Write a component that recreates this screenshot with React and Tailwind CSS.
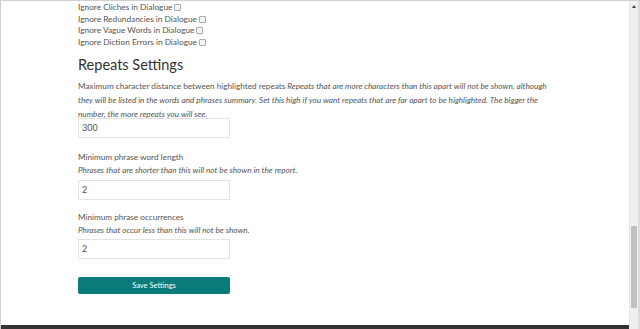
export default function App() {
  const checks = [
    "Ignore Cliches in Dialogue",
    "Ignore Redundancies in Dialogue",
    "Ignore Vague Words in Dialogue",
    "Ignore Diction Errors in Dialogue",
  ];
  return (
    <div className="w-[640px] h-[329px] overflow-hidden flex bg-white border-t border-[#cfcfcf] font-['Lato',sans-serif]">
      <div className="flex-1 flex flex-col border-l border-[#cfcfcf] border-r border-r-[#e6e6e6]">
        <div className="flex-1 pl-[77px] pr-[68px] text-[#555]">
          <div className="pt-[1px] text-[8.3px] leading-[11.5px]">
            {checks.map((c) => (
              <div key={c} className="flex items-center">
                <span>{c}</span>
                <span className="ml-[2px] w-[7px] h-[7px] border border-[#aaa] rounded-[1px] bg-[#f4f4f4]" />
              </div>
            ))}
          </div>
          <h2 className="mt-[7px] text-[14.5px] leading-[20px] text-[#333]">Repeats Settings</h2>
          <p className="mt-[4px] -mb-[3px] text-[8.2px] leading-[14px]">
            <span>Maximum character distance between highlighted repeats </span>
            <i>
              Repeats that are more characters than this apart will not be shown, although they will be listed in the
              words and phrases summary. Set this high if you want repeats that are far apart to be highlighted. The
              bigger the number, the more repeats you will see.
            </i>
          </p>
          <div className="w-[152px] h-[20px] border border-[#e3e3e3] flex items-center pl-[3px] text-[9px] text-[#555]">300</div>
          <div className="mt-[13px] text-[8.2px] leading-[13px]">Minimum phrase word length</div>
          <div className="text-[8.2px] leading-[13px] italic">Phrases that are shorter than this will not be shown in the report.</div>
          <div className="mt-[2.5px] w-[152px] h-[20px] border border-[#e3e3e3] flex items-center pl-[3px] text-[9px] text-[#555]">2</div>
          <div className="mt-[11.5px] text-[8.2px] leading-[13px]">Minimum phrase occurrences</div>
          <div className="text-[8.2px] leading-[13px] italic">Phrases that occur less than this will not be shown.</div>
          <div className="mt-[2px] w-[152px] h-[20px] border border-[#e3e3e3] flex items-center pl-[3px] text-[9px] text-[#555]">2</div>
          <button className="mt-[18px] w-[152px] h-[17px] bg-[#0b7a7a] rounded-[2px] text-white text-[7.5px] flex items-center justify-center">
            Save Settings
          </button>
        </div>
        <div className="h-[4px] bg-[#333]" />
      </div>
      <div className="w-[8px] bg-[#f0f0f0] flex flex-col">
        <div className="h-[10px] flex items-center justify-center">
          <span className="block w-0 h-0 border-l-[2px] border-r-[2px] border-b-[3px] border-l-transparent border-r-transparent border-b-[#444]" />
        </div>
        <div className="mt-[215px] h-[82px] mx-[1px] bg-[#c1c1c1]" />
      </div>
      <div className="w-[2px] bg-[#dcdcdc]" />
    </div>
  );
}
